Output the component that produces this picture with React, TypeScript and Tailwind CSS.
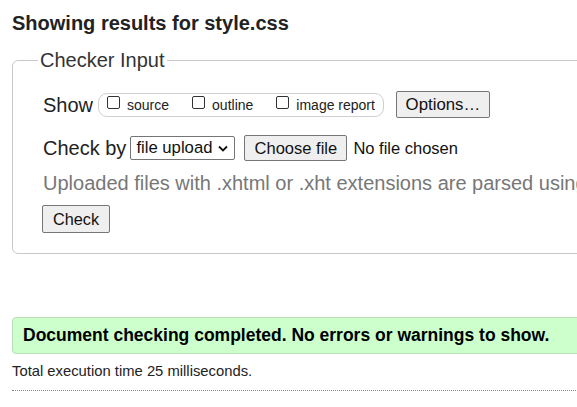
import React from "react";

function Box({ label }: { label: string }) {
  return (
    <span className="flex items-center">
      <span className="inline-block w-[13px] h-[13px] border border-[#333] rounded-[2px] bg-white mr-[7px] -mt-[4px]" />
      <span className="text-[14px] text-[#222] mt-[2px]">{label}</span>
    </span>
  );
}

export default function App() {
  return (
    <div className="w-[577px] h-[407px] overflow-hidden bg-white font-['Liberation_Sans',Arial,sans-serif] text-[#222]">
      <div className="w-[800px] pl-[12px]">
        <h2 className="pt-[11px] text-[20px] leading-[24px] font-bold text-[#222]">Showing results for style.css</h2>
        <fieldset className="mt-[14px] border border-[#c8c8c8] rounded-[6px] pl-[30px] pb-[20px] pt-[0px]">
          <legend className="ml-[-5px] px-[2px] text-[20px] leading-[22px] text-[#333]">Checker Input</legend>
          <div className="flex items-center mt-[20px] h-[27px]">
            <span className="text-[20px] text-[#222]">Show</span>
            <div className="ml-[5px] flex items-center gap-[23px] h-[24px] border border-[#d0d0d0] rounded-[9px] pl-[8px] pr-[8px]">
              <Box label="source" />
              <Box label="outline" />
              <Box label="image report" />
            </div>
            <button className="ml-[12px] h-[27px] w-[94px] border border-[#767676] rounded-[2px] bg-[#efefef] text-[16.8px] text-[#111]">Options…</button>
          </div>
          <div className="flex items-center mt-[17px] h-[26px]">
            <span className="text-[20px] text-[#222]">Check by</span>
            <div className="ml-[4px] flex items-center h-[24px] w-[105px] border border-[#767676] rounded-[2px] pl-[5px] text-[16.7px] text-[#111]">
              file upload
              <svg className="ml-[6px]" width="10" height="7" viewBox="0 0 10 7"><path d="M1 1.5 L5 5.5 L9 1.5" fill="none" stroke="#111" strokeWidth="1.8" /></svg>
            </div>
            <button className="ml-[9px] h-[26px] w-[103px] border border-[#767676] rounded-[2px] bg-[#efefef] text-[16.5px] text-[#111]">Choose file</button>
            <span className="ml-[6px] text-[16.5px] text-[#111]">No file chosen</span>
          </div>
          <p className="mt-[10px] text-[20px] leading-[24px] text-[#777] whitespace-nowrap">Uploaded files with .xhtml or .xht extensions are parsed using the XML parser.</p>
          <button className="mt-[10px] -ml-[1px] h-[28px] w-[68px] border border-[#767676] rounded-[2px] bg-[#efefef] text-[16.3px] text-[#111]">Check</button>
        </fieldset>
        <div className="mt-[63px] h-[37px] flex items-center border border-[#b8e0b8] rounded-[4px] bg-[#ccffcc] pl-[10px]">
          <span className="text-[17.5px] font-bold text-[#000]">Document checking completed. No errors or warnings to show.</span>
        </div>
        <p className="mt-[8px] text-[14.8px] leading-[18px] text-[#222]">Total execution time 25 milliseconds.</p>
        <div className="mt-[10px] border-t border-dotted border-[#888]" />
      </div>
    </div>
  );
}
